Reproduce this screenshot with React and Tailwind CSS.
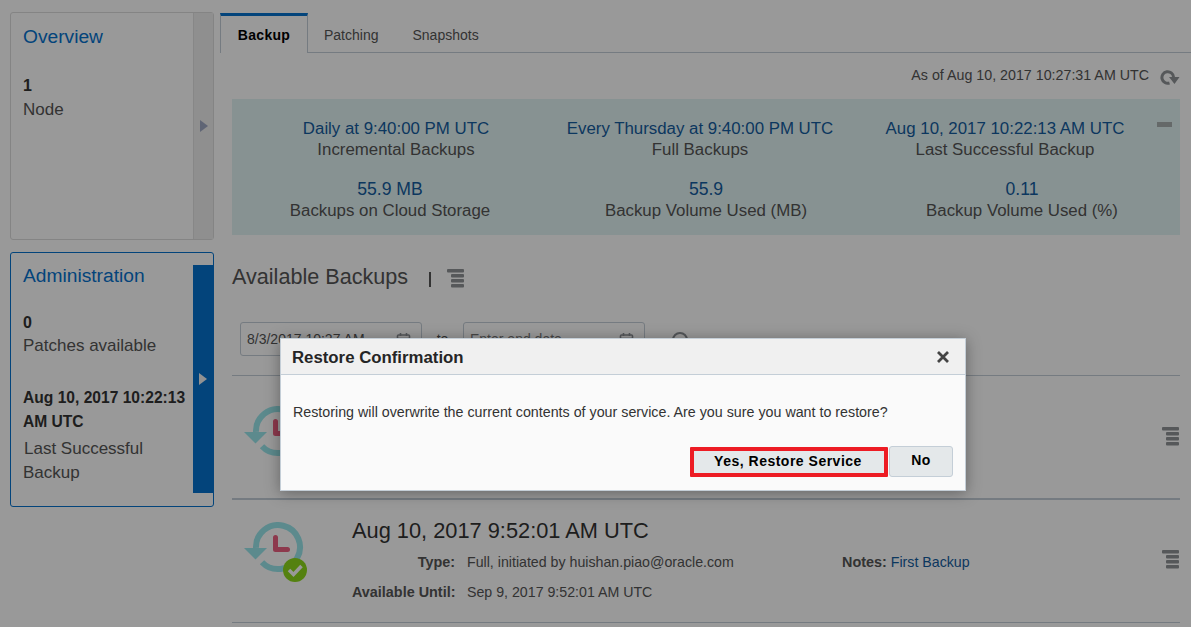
import React from "react";

const MenuIcon = ({ className }) => (
  <svg width="17" height="19" viewBox="0 0 17 19" className={className} fill="#8f9396">
    <rect x="0" y="0" width="17" height="3.4" rx="1" />
    <rect x="4" y="5" width="13" height="3.4" rx="1" />
    <rect x="4" y="10" width="13" height="3.4" rx="1" />
    <rect x="4" y="15" width="13" height="3.4" rx="1" />
  </svg>
);

const CalendarIcon = ({ className }) => (
  <svg width="15" height="15" viewBox="0 0 15 15" className={className} fill="none" stroke="#8a8f94" strokeWidth="1.6">
    <rect x="1.5" y="3" width="12" height="10.5" rx="1" />
    <path d="M1.5 6.5h12M4.5 1v3M10.5 1v3" />
  </svg>
);

const BackupIcon = ({ done }) => (
  <svg width="66" height="62" viewBox="0 0 66 62" fill="none">
    <path d="M12 26A22 22 0 1 1 18 40.200" stroke="#9ae6ec" strokeWidth="6" />
    <path d="M0 26h23L11.500 37.500z" fill="#9ae6ec" />
    <path d="M31.500 15.500v12h12" stroke="#ec5f80" strokeWidth="5" strokeLinejoin="round" strokeLinecap="round" />
    {done && (
      <>
        <circle cx="51" cy="48" r="12" fill="#8cd81c" />
        <path d="M45 48l4.500 4.500L57.500 44" stroke="#fff" strokeWidth="3.500" />
      </>
    )}
  </svg>
);

const SideTab = ({ active, title, children, className }) => (
  <div className={`flex rounded-[3px] border ${active ? "border-[#0572ce]" : "border-[#ddd]"} ${className}`}>
    <div className="flex-1 pl-3 min-w-0">
      <div className={`text-[19.2px] text-[#0572ce] leading-6 ${active ? "mt-[11px]" : "mt-[12px]"}`}>{title}</div>
      {children}
    </div>
    {active ? (
      <div className="w-[20px] bg-[#0572ce] mt-3 mb-[13px] flex items-center justify-center">
        <span className="border-y-[6px] border-l-[8px] border-y-transparent border-l-[#f4f4f4]" />
      </div>
    ) : (
      <div className="w-[20px] bg-[#eeeeee] border-l border-[#e2e2e2] flex items-center justify-center">
        <span className="border-y-[6px] border-l-[8px] border-y-transparent border-l-[#9fa8c4]" />
      </div>
    )}
  </div>
);

const Stat = ({ value, label, big }) => (
  <div className="text-center">
    <div className={`text-[#145c9e] leading-[21px] ${big ? "text-[17.6px]" : "text-[16.85px]"}`}>{value}</div>
    <div className="text-[#555] text-[16.85px] leading-[21px]">{label}</div>
  </div>
);

const Detail = ({ label, children, className }) => (
  <div className={`flex leading-5 ${className}`}>
    <div className="w-[103px] text-right text-[14.4px] font-bold text-[#555] shrink-0 whitespace-nowrap">{label}</div>
    <div className="ml-3 text-[14.2px] text-[#555] whitespace-nowrap">{children}</div>
  </div>
);

export default function App() {
  return (
    <div className="relative h-screen w-full overflow-hidden bg-white font-['Liberation_Sans',Arial,sans-serif]">
      <div className="flex h-full">
        {/* left tabs */}
        <div className="w-[204px] ml-[10px] mt-3 shrink-0 flex flex-col gap-3">
          <SideTab title="Overview" className="h-[228px]">
            <div className="mt-[25px] font-bold text-base leading-6 text-[#333]">1</div>
            <div className="text-[#555] text-[17px] leading-6">Node</div>
          </SideTab>
          <SideTab active title="Administration" className="h-[255px]">
            <div className="mt-[23px] font-bold text-base leading-[23px] text-[#333]">0</div>
            <div className="text-[#555] text-[17px] leading-6">Patches available</div>
            <div className="mt-[28px] font-bold text-[15.6px] leading-6 text-[#333]">Aug 10, 2017 10:22:13 AM UTC</div>
            <div className="text-[#555] text-[17px] leading-6 mt-[3px]">
              <span className="ml-px">Last Successful</span>
              <br />
              Backup
            </div>
          </SideTab>
        </div>

        {/* main */}
        <div className="flex-1 ml-[6px] mt-[13px] min-w-0">
          <div className="flex h-10 border-b border-[#c4ced7] text-sm">
            <div className="w-[88px] h-10 bg-white border-x border-[#c4ced7] border-t-[3px] border-t-[#0572ce] font-bold text-[#000] flex items-center justify-center tracking-[0.3px]">Backup</div>
            <div className="px-4 pt-1 flex items-center text-[#555]">Patching</div>
            <div className="px-[18px] pt-1 flex items-center text-[#555]">Snapshots</div>
          </div>

          <div className="pl-3 pr-[11px]">
            <div className="flex justify-end items-center h-[46px] text-[14.25px] text-[#555]">
              <span>As of Aug 10, 2017 10:27:31 AM UTC</span>
              <svg width="20" height="16" viewBox="0 0 20 16" className="ml-[11px] mt-[3px]" fill="none">
                <path d="M9.500 13A5.800 5.800 0 1 1 13.500 7" stroke="#8f9396" strokeWidth="3" />
                <path d="M9 7h10.500l-5 7z" fill="#8f9396" />
              </svg>
            </div>

            <div className="relative h-[136px] bg-[#e2f4f4] pt-[19px]">
              <div className="grid grid-cols-[328px_280px_330px]">
                <Stat value="Daily at 9:40:00 PM UTC" label="Incremental Backups" />
                <Stat value="Every Thursday at 9:40:00 PM UTC" label="Full Backups" />
                <Stat value="Aug 10, 2017 10:22:13 AM UTC" label="Last Successful Backup" />
              </div>
              <div className="grid grid-cols-[316px_316px_316px] mt-[19px]">
                <Stat big value="55.9 MB" label="Backups on Cloud Storage" />
                <Stat big value="55.9" label="Backup Volume Used (MB)" />
                <Stat big value="0.11" label="Backup Volume Used (%)" />
              </div>
              <div className="absolute right-2 top-[23px] w-[15px] h-[5px] bg-[#a8b0b0]" />
            </div>

            <div className="flex items-center mt-[29px] h-7">
              <h2 className="text-[21.6px] text-[#555] -mt-[2px]">Available Backups</h2>
              <span className="ml-[21px] mt-[3px] w-[2px] h-[15px] bg-[#555]" />
              <MenuIcon className="ml-[16px]" />
            </div>

            <div className="flex items-center mt-[30px] ml-2 h-[34px] text-sm text-[#555]">
              <div className="w-[182px] h-[34px] rounded-[3px] border border-[#c4ced7] bg-white flex items-center justify-between pl-[6px] pr-[10px]">
                <span>8/3/2017 10:27 AM</span>
                <CalendarIcon />
              </div>
              <span className="w-[41px] text-center">to</span>
              <div className="w-[182px] h-[34px] rounded-[3px] border border-[#c4ced7] bg-white flex items-center justify-between pl-[6px] pr-[10px]">
                <span className="text-[#777]">Enter end date</span>
                <CalendarIcon />
              </div>
              <svg width="20" height="20" viewBox="0 0 20 20" className="ml-[26px] mt-1" fill="none" stroke="#8a8f94" strokeWidth="2">
                <circle cx="9" cy="9" r="7" />
                <path d="M14 14l5 5" />
              </svg>
            </div>

            <div className="mt-[19px] h-[125px] border-t border-[#c4ced7] border-b-2 border-b-[#c4ced7] flex items-center justify-between pr-[1px]">
              <div className="ml-3">
                <BackupIcon />
              </div>
              <MenuIcon className="-mt-[2px]" />
            </div>

            <div className="relative h-[123px] border-b border-[#c4ced7] flex items-center justify-between pr-[1px]">
              <div className="self-start mt-[22px] ml-3">
                <BackupIcon done />
              </div>
              <div className="self-start flex-1 ml-[42px] mt-[18px]">
                <div className="text-[21.8px] leading-[26px] text-[#333]">Aug 10, 2017 9:52:01 AM UTC</div>
                <div className="flex mt-[8px]">
                  <Detail label="Type:" className="w-[490px]">Full, initiated by huishan.piao@oracle.com</Detail>
                  <div className="flex leading-5 gap-1">
                    <span className="text-[14.4px] font-bold text-[#555]">Notes:</span>
                    <span className="text-[14.2px] text-[#145c9e]">First Backup</span>
                  </div>
                </div>
                <Detail label="Available Until:" className="mt-[10px]">Sep 9, 2017 9:52:01 AM UTC</Detail>
              </div>
              <MenuIcon className="-mt-[3px]" />
            </div>
          </div>
        </div>
      </div>

      {/* modal glass */}
      <div className="absolute inset-0 bg-black/40" />

      {/* dialog */}
      <div className="absolute left-[280px] top-[338px] w-[686px] h-[153px] bg-[#fafafa] border border-[#c4ced7] shadow-[0_2px_14px_rgba(0,0,0,0.35)] flex flex-col">
        <div className="h-9 bg-[#f0f0f0] border-b border-[#c4ced7] flex items-center justify-between pl-[11px] pr-4 shrink-0">
          <span className="font-bold text-[16.8px] text-[#252525] pt-[2px]">Restore Confirmation</span>
          <svg width="12" height="12" viewBox="0 0 12 12" stroke="#444" strokeWidth="2.800">
            <path d="M1 1l10 10M11 1L1 11" />
          </svg>
        </div>
        <div className="pl-3 mt-[28px] text-[14.27px] leading-[18px] text-[#333]">
          Restoring will overwrite the current contents of your service. Are you sure you want to restore?
        </div>
        <div className="flex justify-end items-end mt-[25px] pr-[12px] text-sm font-bold text-[#000] tracking-[0.5px]">
          <button className="w-[198px] h-[30px] pr-[2px] pb-[3px] rounded-[1px] bg-[#e4e8ea] border-[4px] border-[#ed1c24]">Yes, Restore Service</button>
          <button className="ml-[1px] w-[64px] h-[31px] pb-[3px] rounded-[3px] bg-[#e4e8ea] border border-[#c4ced7]">No</button>
        </div>
      </div>
    </div>
  );
}
